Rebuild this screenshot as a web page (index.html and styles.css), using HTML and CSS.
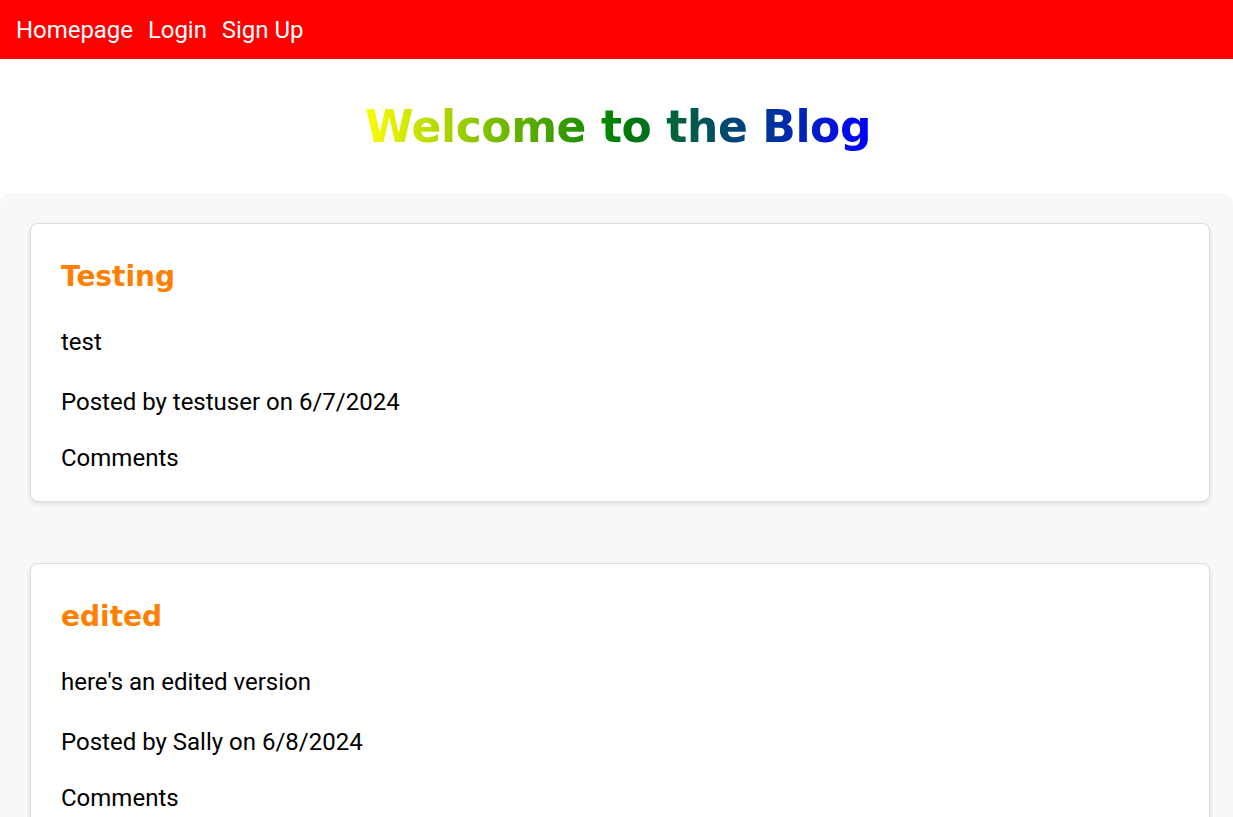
FILE: index.html
```html
<!DOCTYPE html>
<html lang="en">
<head>
<meta charset="utf-8">
<title>Blog</title>
<link rel="stylesheet" href="styles.css">
</head>
<body>
<nav class="nav">
  <a href="#" class="nav-link">Homepage</a>
  <a href="#" class="nav-link">Login</a>
  <a href="#" class="nav-link">Sign Up</a>
</nav>
<header class="hero">
  <h1 class="hero-title">Welcome to the Blog</h1>
</header>
<main class="posts">
  <article class="card">
    <h2 class="card-title">Testing</h2>
    <p class="card-text">test</p>
    <p class="card-text">Posted by testuser on 6/7/2024</p>
    <p class="card-text card-comments">Comments</p>
  </article>
  <article class="card">
    <h2 class="card-title">edited</h2>
    <p class="card-text">here's an edited version</p>
    <p class="card-text">Posted by Sally on 6/8/2024</p>
    <p class="card-text card-comments">Comments</p>
  </article>
</main>
</body>
</html>
```
FILE: styles.css
```css
html, body {
  margin: 0;
  padding: 0;
}
body {
  font-family: Roboto, "Liberation Sans", sans-serif;
  background: #ffffff;
  color: #000;
}
.nav {
  background: #ff0000;
  height: 59px;
  display: flex;
  align-items: center;
  gap: 15px;
  padding: 0 16px;
}
.nav-link {
  color: #fff;
  text-decoration: none;
  font-size: 24px;
  letter-spacing: -0.05px;
}
.hero {
  height: 134px;
  display: flex;
  justify-content: center;
  align-items: center;
}
.hero-title {
  margin: 0;
  font-family: "DejaVu Sans", sans-serif;
  font-weight: 700;
  font-size: 44px;
  letter-spacing: -0.4px;
  padding-left: 3px;
  background: linear-gradient(to right, #ffff00, #008000, #0000ff);
  -webkit-background-clip: text;
  background-clip: text;
  color: transparent;
}
.posts {
  background: #f8f8f8;
  border-radius: 10px 10px 0 0;
  padding: 30px 23px 30px 30px;
  display: flex;
  flex-direction: column;
  gap: 61px;
}
.card {
  background: #fff;
  border: 1px solid #ddd;
  border-radius: 8px;
  box-shadow: 0 2px 5px rgba(0,0,0,0.1);
  padding: 30px;
}
.card-title {
  margin: 0 0 28px;
  font-family: "DejaVu Sans", sans-serif;
  font-weight: 700;
  font-size: 28px;
  line-height: 46px;
  color: #ff7f00;
}
.card-text {
  margin: 0 0 32px;
  font-size: 24px;
  line-height: 28px;
}
.card-comments {
  margin: -4px 0 -1px;
}
```
